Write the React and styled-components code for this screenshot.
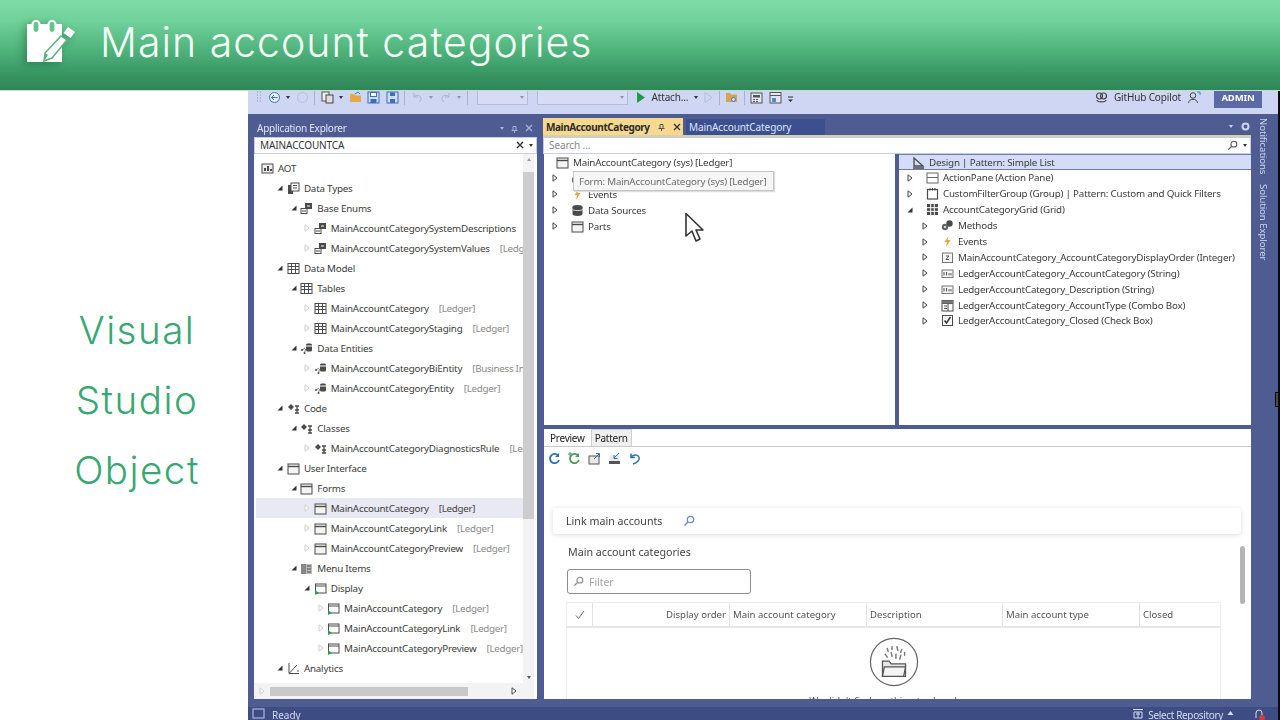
import React from 'react';
import styled, { createGlobalStyle } from 'styled-components';

const GlobalStyle = createGlobalStyle`
html, body { margin: 0; padding: 0; background: white; }
body { font-family: "Noto Sans", "Open Sans", sans-serif; overflow: hidden; }
* { box-sizing: border-box; }
`

const Page = styled.div`
width: 1280px;
height: 720px;
display: flex;
flex-direction: column;
overflow: hidden;
`
const Banner = styled.header`
height: 91px;
flex: none;
display: flex;
align-items: center;
gap: 25px;
padding: 0 0 7px 27px;
position: relative;
z-index: 2;
background: linear-gradient(180deg, #7fdca6 0%, #72d29b 22%, #55b981 50%, #3d9d69 76%, #2d8655 100%);
border-bottom: 1px solid #bfe0cc;
`
const BannerTitle = styled.h1`
margin: 0;
font-family: "Inter", sans-serif;
font-weight: 300;
font-size: 41px;
letter-spacing: 1px;
color: #f4fff8;
`
const Body = styled.div`
flex: 1;
display: flex;
min-height: 0;
`
const Side = styled.aside`
width: 248px;
flex: none;
padding: 204px 0 0 26px;
display: flex;
flex-direction: column;
align-items: center;
`
const SideWord = styled.div`
font-family: "Inter", sans-serif;
font-weight: 300;
font-size: 38.5px;
letter-spacing: 1.5px;
line-height: 70px;
color: #37a873;
`
const Vs = styled.main`
flex: 1;
display: flex;
flex-direction: column;
min-width: 0;
position: relative;
filter: blur(0.35px);
background: #4f5c92;
border-right: 2px solid #0c0c0c;
`
const EdgeNub = styled.span`
position: absolute;
right: 0;
top: 301px;
width: 3px;
height: 15px;
background: #4a4a4a;
border: 1px solid #0c0c0c;
border-right: none;
`
const Toolbar = styled.div`
height: 23px;
flex: none;
display: flex;
align-items: center;
gap: 5.5px;
padding: 0 16px 11px 8px;
background: #cfd6f3;
font-size: 10px;
letter-spacing: -0.15px;
color: #333;
`
const Sep = styled.span`
width: 1px;
height: 15px;
flex: none;
background: #a9b0cf;
`
const Combo = styled.span`
width: ${p => p.$w}px;
height: 16px;
flex: none;
margin: 0 3px 0 ${p => p.$lead || 0}px;
border: 1px solid #b4bbd8;
background: #d6dcf5;
display: flex;
align-items: center;
justify-content: flex-end;
padding-right: 3px;
`
const Caret = styled.span`
width: 0;
height: 0;
flex: none;
border-left: 2.5px solid transparent;
border-right: 2.5px solid transparent;
border-top: 3px solid ${p => p.$color || '#555'};
`
const CaretUp = styled(Caret)`
transform: rotate(180deg);
`
const Spacer = styled.span`
flex: 1;
`
const Admin = styled.span`
width: 48px;
height: 22px;
flex: none;
background: #5a6aa6;
color: white;
font-weight: 700;
font-size: 9.5px;
display: flex;
align-items: center;
justify-content: center;
padding-top: 1px;
margin-left: 8px;
`
const Workspace = styled.div`
flex: 1;
display: flex;
min-height: 0;
padding: 4px 0 8px 6px;
gap: 6px;
`
const Explorer = styled.section`
width: 283px;
flex: none;
display: flex;
flex-direction: column;
padding-top: 2px;
`
const ExplorerTitle = styled.div`
height: 17px;
flex: none;
display: flex;
align-items: center;
gap: 6px;
padding: 0 4px 1px 3px;
color: #dfe4f7;
font-size: 10px;
letter-spacing: -0.25px;
`
const SearchBox = styled.div`
height: 17px;
flex: none;
display: flex;
align-items: center;
gap: 5px;
padding: 0 3px 1px 5px;
background: white;
border: 1px solid #c5cdec;
font-size: 10px;
letter-spacing: -0.1px;
color: ${p => (p.$hint ? '#888' : '#333')};
`
const TreeFrame = styled.div`
flex: 1;
min-height: 0;
background: white;
display: grid;
grid-template-columns: 1fr 11px;
grid-template-rows: 1fr 16px;
padding-right: 3px;
`
const TreeScroll = styled.div`
overflow: hidden;
padding: 4px 0 0 2px;
min-width: 0;
`
const Row = styled.div`
height: ${p => p.$h || 20}px;
display: flex;
align-items: center;
white-space: nowrap;
overflow: hidden;
padding-left: ${p => p.$indent}px;
font-size: 9.8px;
letter-spacing: -0.2px;
color: #3b3b3b;
background: ${p => (p.$selected ? '#e9e9f3' : 'transparent')};
`
const Arrow = styled.span`
width: 13px;
flex: none;
display: flex;
justify-content: center;
`
const RowGap = styled.span`
width: 10px;
flex: none;
`
const Label = styled.span`
margin-left: 4px;
`
const Tag = styled.span`
margin-left: 10px;
color: ${p => (p.$selected ? '#444' : '#8a8a8a')};
letter-spacing: -0.3px;
`
const VBar = styled.div`
background: #f3f3f3;
display: flex;
flex-direction: column;
align-items: center;
justify-content: space-between;
padding: 4px 0;
`
const VThumb = styled.div`
width: 100%;
height: 347px;
margin-top: 11px;
margin-bottom: auto;
background: #cdcdcd;
`
const HBar = styled.div`
background: #f3f3f3;
display: flex;
align-items: center;
gap: 2px;
padding: 0 14px 0 1px;
grid-column: 1 / 3;
`
const HThumb = styled.div`
width: 198px;
height: 9px;
margin-right: auto;
background: #c9c9c9;
`
const Editor = styled.section`
width: 708px;
flex: none;
display: flex;
flex-direction: column;
`
const TabStrip = styled.div`
height: 17px;
flex: none;
display: flex;
align-items: stretch;
font-size: 10px;
`
const ActiveTab = styled.div`
width: 140px;
flex: none;
display: flex;
align-items: center;
gap: 7px;
padding-left: 3px;
background: #f6d88f;
color: #2a2a2a;
font-weight: 700;
letter-spacing: -0.4px;
`
const IdleTab = styled.div`
width: 139px;
height: 16px;
margin: 1px 0 0 3px;
flex: none;
display: flex;
align-items: center;
padding-left: 3px;
background: #3c5090;
color: #dfe6fb;
letter-spacing: -0.1px;
`
const StripEnd = styled.div`
flex: 1;
display: flex;
align-items: center;
justify-content: flex-end;
gap: 8px;
padding-right: 1px;
`
const GoldLine = styled.div`
height: 2px;
flex: none;
background: #d8cfa6;
`
const SplitTop = styled.div`
height: 271px;
flex: none;
display: flex;
gap: 4px;
padding-left: 1px;
`
const Pane = styled.div`
flex: ${p => (p.$w ? 'none' : '1')};
width: ${p => (p.$w ? `${p.$w}px` : 'auto')};
background: white;
position: relative;
min-width: 0;
overflow: hidden;
`
const DesignRow = styled(Row)`
background: #d5dcf8;
border-top: 1px solid #6f7cad;
border-bottom: 1px solid #6f7cad;
`
const Tip = styled.div`
position: absolute;
left: 29px;
top: 17px;
width: 201px;
height: 20px;
display: flex;
align-items: center;
padding-left: 5px;
background: #f6f6f6;
border: 1px solid #c4c4c4;
box-shadow: 1px 1px 1px #ddd;
font-size: 9.8px;
letter-spacing: -0.2px;
color: #6d6d6d;
white-space: nowrap;
`
const Pointer = styled.svg`
position: absolute;
left: 140px;
top: 58px;
`
const Lower = styled.div`
flex: 1;
min-height: 0;
margin-top: 4px;
margin-left: 1px;
background: white;
position: relative;
overflow: hidden;
`
const LowerTabs = styled.div`
height: 18px;
display: flex;
align-items: flex-end;
border-bottom: 1px solid #c9c9c9;
font-size: 10px;
letter-spacing: -0.25px;
`
const LowerTab = styled.span`
height: 17px;
padding: 0 ${p => (p.$on ? 5 : 3)}px;
display: flex;
align-items: center;
color: #222;
background: ${p => (p.$on ? 'white' : '#efefef')};
border: 1px solid ${p => (p.$on ? 'transparent' : '#cfcfcf')};
border-bottom: none;
`
const LowerTools = styled.div`
height: 22px;
display: flex;
align-items: center;
gap: 7px;
padding-left: 4px;
`
const FormArea = styled.div`
padding: 39px 10px 0 9px;
`
const LinkBar = styled.div`
width: 688px;
height: 26px;
display: flex;
align-items: center;
gap: 20px;
padding-left: 13px;
border-radius: 4px;
box-shadow: 0 1px 5px rgba(90, 90, 120, 0.22);
font-size: 10.7px;
color: #444;
`
const FormHeading = styled.div`
margin: 10px 0 0 15px;
height: 16px;
display: flex;
align-items: center;
font-size: 10.7px;
color: #444;
`
const FilterBox = styled.div`
width: 184px;
height: 25px;
margin: 9px 0 0 14px;
display: flex;
align-items: center;
gap: 5px;
padding-left: 5px;
border: 1px solid #8c8c8c;
border-radius: 3px;
font-size: 10.4px;
color: #a3a3a3;
`
const GridBox = styled.div`
width: 655px;
margin: 8px 0 0 13px;
border: 1px solid #eee;
border-bottom: none;
`
const GridHead = styled.div`
height: 25px;
display: grid;
grid-template-columns: 25px 137px 137px 136px 137px 1fr;
border-bottom: 2px solid #e6e6e6;
font-size: 9.6px;
color: #555;
`
const GridCell = styled.div`
display: flex;
align-items: center;
justify-content: ${p => (p.$align || 'flex-start')};
padding: 0 3px;
border-left: ${p => (p.$first ? 'none' : '1px solid #e2e2e2')};
white-space: nowrap;
`
const EmptyState = styled.div`
display: flex;
flex-direction: column;
align-items: center;
padding-top: 9px;
font-size: 9.6px;
color: #555;
`
const EmptyText = styled.div`
margin-top: 7px;
white-space: nowrap;
`
const FormScroll = styled.div`
position: absolute;
left: 696px;
top: 117px;
width: 5px;
height: 58px;
border-radius: 3px;
background: #b4b4b4;
`
const Rail = styled.div`
flex: 1;
min-width: 0;
display: flex;
flex-direction: column;
align-items: flex-start;
gap: 10px;
`
const RailWord = styled.span`
writing-mode: vertical-rl;
font-size: 9.6px;
line-height: 13px;
letter-spacing: -0.05px;
color: #ccd4f2;
`
const Status = styled.footer`
height: 13px;
flex: none;
display: flex;
align-items: flex-start;
gap: 7px;
padding: 1px 12px 0 4px;
background: #3e4c84;
color: #d5dbf3;
font-size: 10px;
line-height: 14px;
`
const RepoGroup = styled.span`
display: flex;
align-items: flex-start;
gap: 4px;
letter-spacing: -0.35px;
`
const Bell = styled.span`
margin-left: 12px;
`
const BannerIcon = styled.svg`
flex: none;
filter: drop-shadow(-3px 2px 4px rgba(0, 60, 30, 0.35));
`
const Glyph = styled.svg`
flex: none;
`

function Ic({ n }) {
  const d = '#4a4a4a'
  const shapes = {
    aot: <><rect x="1" y="2" width="11" height="9" fill="#eee" stroke={d} /><rect x="3" y="6" width="2" height="3" fill={d} /><rect x="6" y="4" width="2" height="5" fill={d} /><rect x="9" y="7" width="2" height="2" fill={d} /></>,
    types: <><rect x="1" y="3" width="5" height="9" fill={d} /><rect x="4" y="1" width="8" height="8" fill="#fff" stroke={d} /><path d="M6 3.5h4M6 6h4" stroke={d} /></>,
    enum: <><rect x="1" y="6.5" width="6" height="5" fill="#fff" stroke={d} /><rect x="5.5" y="1.5" width="6" height="5" fill={d} stroke={d} /><path d="M2 9h4" stroke={d} /><path d="M7 4h3" stroke="#fff" /></>,
    table: <><rect x="1" y="1.5" width="11" height="10" fill="#fff" stroke={d} /><path d="M1 4.5h11M1 7.5h11M4.500 2v9M8.500 2v9" stroke={d} /></>,
    entity: <><circle cx="2" cy="8" r="1" fill={d} /><circle cx="4.5" cy="11" r="1" fill={d} /><path d="M2 8l3-2M4.5 11l1-4" stroke={d} strokeWidth=".7" /><rect x="6" y="1.5" width="6" height="8" rx="1.5" fill={d} /><path d="M6 4h6" stroke="#fff" /></>,
    code: <><path d="M1 5l3-3 3 3-3 3z" fill={d} /><path d="M8 4h4M10 4v7M8 8h4M8 11h4" stroke={d} strokeWidth="1.3" /></>,
    form: <><rect x="1" y="2" width="11" height="10" fill="#f4f4f4" stroke={d} /><path d="M1 4.5h11" stroke={d} strokeWidth="1.4" /></>,
    menu: <><rect x="1" y="2" width="5" height="10" fill="#888" /><rect x="6" y="2" width="6" height="10" fill="#bbb" /><path d="M7 4h4M7 7h4M7 10h4" stroke={d} /></>,
    display: <><rect x="1.5" y="2" width="10.5" height="9" fill="#fff" stroke={d} /><path d="M1.5 4h10.5" stroke={d} /><path d="M1 8l4 3-4 2z" fill="#25a244" /></>,
    analytics: <><path d="M2 1v10.5h10" fill="none" stroke={d} /><path d="M2.500 11L10 3" fill="none" stroke={d} /><circle cx="11" cy="9" r=".8" fill={d} /></>,
    design: <><path d="M2 2v8h9z" fill="none" stroke={d} strokeWidth="1.3" /><path d="M1 12h11" stroke={d} strokeWidth="1.5" /></>,
    pane: <><rect x="1" y="2" width="11" height="10" fill="#fff" stroke="#666" /><path d="M1 6.5h11" stroke="#666" /></>,
    group: <><rect x="1.5" y="2.5" width="10" height="9.5" fill="#fff" stroke={d} strokeWidth="1.2" /><path d="M4 1v2.5M6.5 1v2.5M9 1v2.5" stroke={d} /></>,
    grid: <><rect x="1" y="1" width="11" height="11" fill={d} /><path d="M4.7 1v11M8.3 1v11M1 4.7h11M1 8.3h11" stroke="#fff" /></>,
    methods: <><circle cx="8.5" cy="4.5" r="3.2" fill={d} /><circle cx="4" cy="8" r="3.2" fill="#666" /><circle cx="4" cy="8" r="1" fill="#fff" /></>,
    events: <path d="M7.5 1L3.5 7h2.5l-1 5 4.5-7H6.5z" fill="#e8a33a" />,
    int: <><rect x="1.5" y="2" width="10" height="9.5" fill="#f5f5f5" stroke="#777" /><path d="M5 5h3l-3 3.5h3" fill="none" stroke="#555" /></>,
    str: <><rect x="1" y="3" width="11" height="7.5" fill="#f5f5f5" stroke="#777" /><path d="M3 5v3.5M5.5 5v3.5M8 6v2.5M10 6v2.5" stroke="#555" /></>,
    combo: <><rect x="1" y="1.5" width="11" height="10.5" fill="#fff" stroke={d} /><path d="M1 4.5h11M7 4.5v7.5M3 7h3M3 9.5h3" stroke={d} /><rect x="1" y="1.5" width="11" height="3" fill="#777" /></>,
    check: <><rect x="1.5" y="1.5" width="10" height="10" fill="#f7f7f7" stroke={d} /><path d="M3.5 6.5l2 2.5 4-6" fill="none" stroke="#333" strokeWidth="1.4" /></>,
    source: <><ellipse cx="6.5" cy="3" rx="5" ry="2" fill={d} /><path d="M1.5 3v7c0 1.2 2.2 2 5 2s5-.8 5-2V3" fill={d} /><path d="M1.5 5.5c1 1.4 9 1.4 10 0" fill="none" stroke="#fff" strokeWidth=".8" /></>
  }
  return <Glyph width="13" height="13" viewBox="0 0 13 13">{shapes[n]}</Glyph>
}

function Twisty({ open, faint }) {
  if (open) {
    return <Arrow><svg width="6" height="6" viewBox="0 0 6 6"><path d="M5.5 0.5V5.5H0.5z" fill="#333" /></svg></Arrow>
  }
  return (
    <Arrow>
      <svg width="6" height="8" viewBox="0 0 6 8">
        <path d="M1 .8L5 4 1 7.2z" fill="white" stroke={faint ? '#cfcfcf' : '#444'} />
      </svg>
    </Arrow>
  )
}

const tree = [
  [0, 'none', 'aot', 'AOT'],
  [1, 'open', 'types', 'Data Types'],
  [2, 'open', 'enum', 'Base Enums'],
  [3, 'closed', 'enum', 'MainAccountCategorySystemDescriptions'],
  [3, 'closed', 'enum', 'MainAccountCategorySystemValues', '[Ledger]'],
  [1, 'open', 'table', 'Data Model'],
  [2, 'open', 'table', 'Tables'],
  [3, 'closed', 'table', 'MainAccountCategory', '[Ledger]'],
  [3, 'closed', 'table', 'MainAccountCategoryStaging', '[Ledger]'],
  [2, 'open', 'entity', 'Data Entities'],
  [3, 'closed', 'entity', 'MainAccountCategoryBiEntity', '[Business Intelligence]'],
  [3, 'closed', 'entity', 'MainAccountCategoryEntity', '[Ledger]'],
  [1, 'open', 'code', 'Code'],
  [2, 'open', 'code', 'Classes'],
  [3, 'closed', 'code', 'MainAccountCategoryDiagnosticsRule', '[Ledger]'],
  [1, 'open', 'form', 'User Interface'],
  [2, 'open', 'form', 'Forms'],
  [3, 'closed', 'form', 'MainAccountCategory', '[Ledger]', true],
  [3, 'closed', 'form', 'MainAccountCategoryLink', '[Ledger]'],
  [3, 'closed', 'form', 'MainAccountCategoryPreview', '[Ledger]'],
  [2, 'open', 'menu', 'Menu Items'],
  [3, 'open', 'display', 'Display'],
  [4, 'closed', 'display', 'MainAccountCategory', '[Ledger]'],
  [4, 'closed', 'display', 'MainAccountCategoryLink', '[Ledger]'],
  [4, 'closed', 'display', 'MainAccountCategoryPreview', '[Ledger]'],
  [1, 'open', 'analytics', 'Analytics'],
  [2, 'open', 'analytics', '']
]

const middle = [
  ['closed', 'methods', 'Methods'],
  ['closed', 'events', 'Events'],
  ['closed', 'source', 'Data Sources'],
  ['closed', 'form', 'Parts']
]

const design = [
  [0, 'closed', 'pane', 'ActionPane (Action Pane)'],
  [0, 'closed', 'group', 'CustomFilterGroup (Group) | Pattern: Custom and Quick Filters'],
  [0, 'open', 'grid', 'AccountCategoryGrid (Grid)'],
  [1, 'closed', 'methods', 'Methods'],
  [1, 'closed', 'events', 'Events'],
  [1, 'closed', 'int', 'MainAccountCategory_AccountCategoryDisplayOrder (Integer)'],
  [1, 'closed', 'str', 'LedgerAccountCategory_AccountCategory (String)'],
  [1, 'closed', 'str', 'LedgerAccountCategory_Description (String)'],
  [1, 'closed', 'combo', 'LedgerAccountCategory_AccountType (Combo Box)'],
  [1, 'closed', 'check', 'LedgerAccountCategory_Closed (Check Box)']
]

function Glass({ color = '#555', size = 11 }) {
  return (
    <Glyph width={size} height={size} viewBox="0 0 12 12">
      <circle cx="7.5" cy="4.5" r="3.2" fill="none" stroke={color} strokeWidth="1.2" />
      <path d="M5 7L1.5 10.5" stroke={color} strokeWidth="1.4" />
    </Glyph>
  )
}

function Cross({ color = '#333' }) {
  return (
    <Glyph width="8" height="8" viewBox="0 0 8 8">
      <path d="M1 1l6 6M7 1L1 7" stroke={color} strokeWidth="1.3" />
    </Glyph>
  )
}

function Pin({ color = '#555' }) {
  return (
    <Glyph width="9" height="9" viewBox="0 0 9 9">
      <path d="M3 2.500h3v4H3zM1.500 6.500h6M4.500 6.500V9" fill="none" stroke={color} />
    </Glyph>
  )
}

function ToolGlyph({ children, w = 13 }) {
  return <Glyph width={w} height="13" viewBox={`0 0 ${w} 13`}>{children}</Glyph>
}

function App() {
  return (
    <Page>
      <GlobalStyle />
      <Banner>
        <BannerIcon width="48" height="44" viewBox="0 0 48 44">
          <path d="M0 4h35v38H0z" fill="white" />
          <rect x="5.500" y="1" width="7" height="12" rx="3.500" fill="#64c28d" stroke="white" strokeWidth="2.200" />
          <rect x="21.500" y="1" width="7" height="12" rx="3.500" fill="#64c28d" stroke="white" strokeWidth="2.200" />
          <path d="M34 16l6 4-15 18-8 3 1-8z" fill="white" stroke="#56b27f" strokeWidth="1.500" />
          <path d="M17 41l1-8 3 2z" fill="#56b27f" />
          <path d="M41 7l7 5-4.500 6-7-5z" fill="white" />
        </BannerIcon>
        <BannerTitle>Main account categories</BannerTitle>
      </Banner>
      <Body>
        <Side>
          <SideWord>Visual</SideWord>
          <SideWord>Studio</SideWord>
          <SideWord>Object</SideWord>
        </Side>
        <Vs>
          <EdgeNub />
          <Toolbar>
            <ToolGlyph w={6}><path d="M1 1h1M4 1h1M1 4h1M4 4h1M1 7h1M4 7h1M1 10h1M4 10h1" stroke="#8b93b5" /></ToolGlyph>
            <ToolGlyph><circle cx="6.5" cy="6.5" r="5" fill="#e8edfa" stroke="#3e79bd" /><path d="M9.5 6.5h-6M6 4L3.5 6.5 6 9" fill="none" stroke="#3e79bd" /></ToolGlyph>
            <Caret $color="#333" />
            <ToolGlyph><circle cx="6.5" cy="6.5" r="5" fill="none" stroke="#b8bfd8" /></ToolGlyph>
            <Sep />
            <ToolGlyph><rect x="1" y="1" width="7" height="9" fill="#eee" stroke="#555" /><rect x="5" y="4" width="7" height="8" fill="#ddd" stroke="#444" /></ToolGlyph>
            <Caret $color="#333" />
            <ToolGlyph><path d="M1 3h4l1 1.5h6V11H1z" fill="#e2a94a" /><path d="M6 3l3-2 2 2" fill="none" stroke="#3e79bd" /></ToolGlyph>
            <ToolGlyph><rect x="1" y="1" width="11" height="11" fill="#cfdcf5" stroke="#3e6fb5" /><rect x="3.5" y="1.5" width="6" height="4" fill="#fff" stroke="#3e6fb5" /><rect x="3.5" y="8" width="6" height="4" fill="#3e6fb5" /></ToolGlyph>
            <ToolGlyph><rect x="1" y="1" width="11" height="11" fill="#cfdcf5" stroke="#3e6fb5" /><rect x="4" y="1.5" width="5" height="3.5" fill="#3e6fb5" /><rect x="4" y="8" width="5" height="4" fill="#3e6fb5" /></ToolGlyph>
            <Sep />
            <ToolGlyph><path d="M3 2v4h4M3 6c2-3 8-2 7 3l-2 2" fill="none" stroke="#aab1cb" /></ToolGlyph>
            <Caret $color="#8d94ad" />
            <ToolGlyph><path d="M10 2v4H6M10 6C8 3 2 4 3 9l2 2" fill="none" stroke="#aab1cb" /></ToolGlyph>
            <Caret $color="#8d94ad" />
            <Sep />
            <Combo $w={51} $lead={4}><Caret $color="#8d94ad" /></Combo>
            <Combo $w={91}><Caret $color="#8d94ad" /></Combo>
            <ToolGlyph w={10}><path d="M1 1l8 5.500L1 12z" fill="#1e9c4a" /></ToolGlyph>
            <span>Attach...</span>
            <Caret $color="#333" />
            <ToolGlyph w={10}><path d="M2 1.500l7 5-7 5z" fill="none" stroke="#b7bed8" /></ToolGlyph>
            <Sep />
            <ToolGlyph><path d="M1 2h4l1 1.500h6V11H1z" fill="#d9a354" /><circle cx="8.500" cy="8.500" r="2" fill="#cfe0fa" stroke="#3e79bd" /></ToolGlyph>
            <Sep />
            <ToolGlyph><rect x="1" y="2" width="11" height="10" fill="#e3e6f4" stroke="#555" /><rect x="3" y="4" width="7" height="2.500" fill="#555" /><path d="M3 8.500h2M6 8.500h2M3 10.500h2M6 10.500h2" stroke="#555" /></ToolGlyph>
            <ToolGlyph><rect x="1" y="1.500" width="11" height="10.500" fill="#e3e6f4" stroke="#555" /><path d="M1 4.500h11" stroke="#555" /><rect x="3" y="7" width="4" height="4" fill="#4d8fd1" /></ToolGlyph>
            <ToolGlyph w={7}><path d="M1 6h5" stroke="#333" /><path d="M1 8.500h5L3.500 11z" fill="#333" /></ToolGlyph>
            <Spacer />
            <ToolGlyph><circle cx="4.500" cy="5" r="3" fill="none" stroke="#444" strokeWidth="1.200" /><circle cx="8.500" cy="5" r="3" fill="none" stroke="#444" strokeWidth="1.200" /><path d="M2 9c0 2.500 9 2.500 9 0" fill="none" stroke="#444" strokeWidth="1.200" /></ToolGlyph>
            <span>GitHub Copilot</span>
            <ToolGlyph w={14}><circle cx="6" cy="4.500" r="2.800" fill="none" stroke="#444" /><path d="M1.500 12c.5-5 8.500-5 9 0" fill="none" stroke="#444" /><path d="M10 1h3v3" fill="none" stroke="#3e79bd" /></ToolGlyph>
            <Admin>ADMIN</Admin>
          </Toolbar>
          <Workspace>
            <Explorer>
              <ExplorerTitle>
                Application Explorer
                <Spacer />
                <Caret $color="#aab3d6" />
                <Pin color="#aab3d6" />
                <Cross color="#aab3d6" />
              </ExplorerTitle>
              <SearchBox>
                MAINACCOUNTCA
                <Spacer />
                <Cross />
                <Caret $color="#333" />
              </SearchBox>
              <TreeFrame>
                <TreeScroll>
                  {tree.map(([depth, state, icon, text, tag, selected], i) => (
                    <Row key={i} $indent={depth === 0 ? 5 : 4.5 + depth * 13.4} $selected={selected}>
                      {state === 'none' ? null : <Twisty open={state === 'open'} faint={state === 'closed'} />}
                      <Ic n={icon} />
                      <Label>{text}</Label>
                      {tag ? <Tag $selected={selected}>{tag}</Tag> : null}
                    </Row>
                  ))}
                </TreeScroll>
                <VBar>
                  <CaretUp $color="#999" />
                  <VThumb />
                  <Caret $color="#555" />
                </VBar>
                <HBar>
                  <Twisty faint />
                  <HThumb />
                  <Twisty />
                </HBar>
              </TreeFrame>
            </Explorer>
            <Editor>
              <TabStrip>
                <ActiveTab>
                  MainAccountCategory
                  <Pin />
                  <Cross />
                </ActiveTab>
                <IdleTab>MainAccountCategory</IdleTab>
                <StripEnd>
                  <Caret $color="#cdd5f2" />
                  <svg width="9" height="9" viewBox="0 0 9 9"><circle cx="4.500" cy="4.500" r="3" fill="none" stroke="#cdd5f2" strokeWidth="2" /></svg>
                </StripEnd>
              </TabStrip>
              <GoldLine />
              <SearchBox $hint>
                Search ...
                <Spacer />
                <Glass />
                <Caret $color="#333" />
              </SearchBox>
              <SplitTop>
                <Pane $w={351}>
                  <Row $h={16} $indent={12}>
                    <Ic n="form" />
                    <Label>MainAccountCategory (sys) [Ledger]</Label>
                  </Row>
                  {middle.map(([state, icon, text]) => (
                    <Row key={text} $h={16} $indent={4}>
                      <Twisty open={state === 'open'} />
                      <RowGap />
                      <Ic n={icon} />
                      <Label>{text}</Label>
                    </Row>
                  ))}
                  <Tip>Form: MainAccountCategory (sys) [Ledger]</Tip>
                  <Pointer width="20" height="31" viewBox="0 0 20 31">
                    <path d="M2 1.500V24l6-5 4 10 4-2-4-9h7z" fill="white" stroke="#333" strokeWidth="1.600" strokeLinejoin="round" />
                  </Pointer>
                </Pane>
                <Pane>
                  <DesignRow $h={16} $indent={13}>
                    <Ic n="design" />
                    <Label>Design | Pattern: Simple List</Label>
                  </DesignRow>
                  {design.map(([depth, state, icon, text]) => (
                    <Row key={text} $h={15.9} $indent={4 + depth * 15}>
                      <Twisty open={state === 'open'} />
                      <RowGap />
                      <Ic n={icon} />
                      <Label>{text}</Label>
                    </Row>
                  ))}
                </Pane>
              </SplitTop>
              <Lower>
                <LowerTabs>
                  <LowerTab $on>Preview</LowerTab>
                  <LowerTab>Pattern</LowerTab>
                </LowerTabs>
                <LowerTools>
                  <ToolGlyph><path d="M10.500 4A4.600 4.600 0 1 0 11 8" fill="none" stroke="#2d6fb0" strokeWidth="1.800" /><path d="M11 1v4H7z" fill="#2d6fb0" /></ToolGlyph>
                  <ToolGlyph><path d="M10.500 4A4.600 4.600 0 1 0 11 8" fill="none" stroke="#4a9a58" strokeWidth="1.800" /><path d="M11 1v4H7z" fill="#4a9a58" /><path d="M2 0v4M0 2h4" stroke="#4a9a58" /></ToolGlyph>
                  <ToolGlyph><rect x="1" y="4" width="10" height="8" fill="#e9e9e9" stroke="#555" /><path d="M6 7l5-5M8 1.500h3.500V5" fill="none" stroke="#2d6fb0" /></ToolGlyph>
                  <ToolGlyph><rect x="1" y="9" width="11" height="3" fill="#555" /><rect x="2" y="3" width="9" height="6" fill="#e9e9e9" /><path d="M11 1L6 6M6 3v3.500h3.500" fill="none" stroke="#2d6fb0" /></ToolGlyph>
                  <ToolGlyph><path d="M3 1.500v4h4M3 5.500C6 1 12 3 11 7.500 10 10 8 11 5 12" fill="none" stroke="#2d6fb0" strokeWidth="1.500" /></ToolGlyph>
                </LowerTools>
                <FormArea>
                  <LinkBar>
                    Link main accounts
                    <Glass color="#6c86c7" size={12} />
                  </LinkBar>
                  <FormHeading>Main account categories</FormHeading>
                  <FilterBox>
                    <Glass color="#888" />
                    Filter
                  </FilterBox>
                  <GridBox>
                    <GridHead>
                      <GridCell $first $align="center">
                        <svg width="10" height="10" viewBox="0 0 10 10"><path d="M1 5.500l2.500 3L9 1" fill="none" stroke="#555" strokeWidth=".9" /></svg>
                      </GridCell>
                      <GridCell $align="flex-end">Display order</GridCell>
                      <GridCell>Main account category</GridCell>
                      <GridCell>Description</GridCell>
                      <GridCell>Main account type</GridCell>
                      <GridCell>Closed</GridCell>
                    </GridHead>
                    <EmptyState>
                      <svg width="50" height="50" viewBox="0 0 52 52">
                        <circle cx="26" cy="26" r="24.500" fill="white" stroke="#666" strokeWidth="1.300" />
                        <path d="M14 25h7l2 3h15v13H14z" fill="#e8e8e8" stroke="#555" strokeWidth="1.300" />
                        <path d="M16 31h22l-2 10H14z" fill="#f4f4f4" stroke="#555" strokeWidth="1.300" />
                        <path d="M19 12l1 3M24 10l0 3M29 10l1 4M34 13l-1 3M17 18l2 3M23 16l1 4M28 18l0 4M33 19l-1 4M37 16l0 3" stroke="#777" strokeWidth="1.500" strokeLinecap="round" />
                      </svg>
                      <EmptyText>We didn't find anything to show here.</EmptyText>
                    </EmptyState>
                  </GridBox>
                </FormArea>
                <FormScroll />
              </Lower>
            </Editor>
            <Rail>
              <RailWord>Notifications</RailWord>
              <RailWord>Solution Explorer</RailWord>
            </Rail>
          </Workspace>
          <Status>
            <svg width="13" height="11" viewBox="0 0 13 11"><rect x="1" y="1" width="11" height="9" fill="none" stroke="#aab6e2" strokeWidth="1.200" /></svg>
            Ready
            <Spacer />
            <RepoGroup>
              <svg width="12" height="11" viewBox="0 0 12 11"><path d="M1 1.500h10M2 4h8v6H2zM6 4v6M4 6h4" fill="none" stroke="#d5dbf3" /></svg>
              Select Repository
              <svg width="7" height="11" viewBox="0 0 7 11"><path d="M.5 7l3-4 3 4z" fill="#d5dbf3" /></svg>
            </RepoGroup>
            <Bell>
              <svg width="13" height="13" viewBox="0 0 13 13"><path d="M3 10V5a3 3 0 016 0v5" fill="none" stroke="#d5dbf3" /><circle cx="9" cy="10" r="3" fill="#d43a3a" /></svg>
            </Bell>
          </Status>
        </Vs>
      </Body>
    </Page>
  )
}

export default App;
